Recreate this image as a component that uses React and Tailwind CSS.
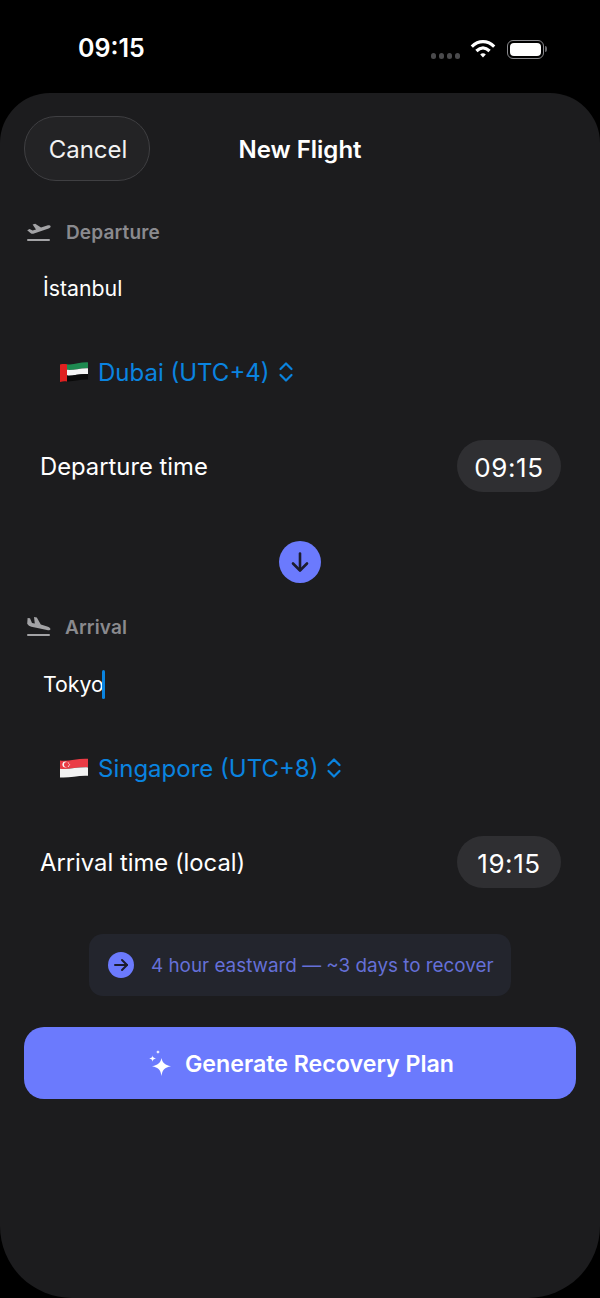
import React from "react";

const Takeoff = () => (
  <svg width="25" height="20" viewBox="0 0 25 20" className="shrink-0" fill="#a3a3a6">
    <path d="M1.2 8.2 L3.6 7 L6.6 8.6 L10 7.4 L6.6 2.6 L9.2 1.8 L15 5.6 L21.2 3.4 C22.8 2.9 24.3 3.2 24.6 4.2 C24.9 5.1 23.9 5.9 22.6 6.4 L8 11.6 C6.6 12.1 5.4 11.7 4.4 10.9 Z" />
    <rect x="1" y="17" width="23" height="2" rx="1" />
  </svg>
);

const Landing = () => (
  <svg width="25" height="20" viewBox="0 0 25 20" className="shrink-0" fill="#a3a3a6">
    <path d="M1.2 6.8 L1.6 1 L4 1.2 L6 6 L8.8 6.6 L8 0 L10.8 0.4 L14.8 7.6 L21.2 9.4 C23.2 10 24.7 11 24.4 12.2 C24.1 13.3 22.6 13.4 21 13 L5.4 9.8 C3.6 9.4 2.2 8.4 1.2 6.8 Z" />
    <rect x="1" y="17" width="23" height="2" rx="1" />
  </svg>
);

const UpDown = () => (
  <svg width="16" height="22" viewBox="0 0 16 22" className="shrink-0" fill="none" stroke="#0a84e0" strokeWidth="2.2" strokeLinecap="round" strokeLinejoin="round">
    <path d="M2.5 8 L8 2.5 L13.5 8" />
    <path d="M2.5 14 L8 19.5 L13.5 14" />
  </svg>
);

const UaeFlag = () => (
  <svg width="28" height="22" viewBox="0 0 28 22" className="shrink-0">
    <path d="M0 3.4 C3 2.8 5 3 7 3.2 L7 20.6 C5 20.2 3 20.2 0 21 Z" fill="#e02020" />
    <path d="M7 3.2 C13 4.4 20 1 28 1.4 L28 7.2 C20 6.8 13 9.6 7 8.8 Z" fill="#1e8a50" />
    <path d="M7 8.8 C13 9.6 20 6.8 28 7.2 L28 13 C20 12.6 13 15 7 14.6 Z" fill="#f4f4f4" />
    <path d="M7 14.6 C13 15 20 12.6 28 13 L28 18.6 C20 18.2 13 20.8 7 20.4 Z" fill="#0a0a0a" />
  </svg>
);

const SgFlag = () => (
  <svg width="28" height="22" viewBox="0 0 28 22" className="shrink-0">
    <path d="M0 3.4 C8 4.8 18 1 28 1.8 L28 10.4 C18 9.8 8 13 0 11.8 Z" fill="#ea3b45" />
    <path d="M0 11.8 C8 13 18 9.8 28 10.4 L28 18.8 C18 18.2 8 21.4 0 20.4 Z" fill="#f2f2f2" />
    <circle cx="5.4" cy="7.6" r="3" fill="#f6f6f6" />
    <circle cx="6.6" cy="7.6" r="2.6" fill="#ea3b45" />
    <circle cx="8.6" cy="6" r="0.6" fill="#f6f6f6" />
    <circle cx="9.6" cy="7.8" r="0.6" fill="#f6f6f6" />
    <circle cx="8.4" cy="9.2" r="0.6" fill="#f6f6f6" />
  </svg>
);

const Sparkles = () => (
  <svg width="24" height="28" viewBox="0 0 24 28" className="shrink-0" fill="#ffffff">
    <path d="M13.5 9 C14.3 13.6 16.6 16 23 17.2 C16.6 18.4 14.3 20.8 13.5 27 C12.7 20.8 10.4 18.4 4 17.2 C10.4 16 12.7 13.6 13.5 9 Z" />
    <path d="M4.6 6.6 C4.9 8.4 5.6 9.1 8 9.6 C5.6 10.1 4.9 10.8 4.6 12.8 C4.3 10.8 3.6 10.1 1.2 9.6 C3.6 9.1 4.3 8.4 4.6 6.6 Z" />
    <path d="M10 1 C10.2 2.2 10.7 2.7 12.2 3 C10.7 3.3 10.2 3.8 10 5.2 C9.8 3.8 9.3 3.3 7.8 3 C9.3 2.7 9.8 2.2 10 1 Z" />
  </svg>
);

const FieldSection = ({ icon, label, labelGap, top, city, caret, flag, zone, timeLabel, time, inputGap }) => (
  <>
    <div className={`flex h-6 items-center ${top}`}>
      <div className="ml-[2px]">{icon}</div>
      <span className={`${labelGap} pt-[2px] text-[19px] font-semibold tracking-[0.15px] text-[#8a8a8e]`}>{label}</span>
    </div>
    <div className={`${inputGap} flex h-10 items-center pl-[19px] text-[21.3px] text-white`}>
      <span className="pt-[2px]">{city}</span>
      {caret && <span className="-ml-[2px] h-[29px] w-[3px] rounded-full bg-[#0a84e0]"></span>}
    </div>
    <div className="mt-11 flex h-10 items-center pl-9">
      {flag}
      <span className="ml-[10px] pt-[2px] text-[24px] text-[#0a84e0]">{zone}</span>
      <span className="ml-[8px]"><UpDown /></span>
    </div>
    <div className="mt-12 flex h-[52px] items-center justify-between pl-4 pr-[15px]">
      <span className="pt-[2px] text-[23.8px] text-white">{timeLabel}</span>
      <span className="flex h-[52px] w-[104px] items-center justify-center rounded-full bg-[#2f2f32] pt-[2px] text-[26px] tracking-[0.6px] text-white">{time}</span>
    </div>
  </>
);

export default function App() {
  return (
    <div className="flex h-[1298px] w-[600px] flex-col overflow-hidden bg-black font-['Inter',sans-serif]">
      {/* status bar */}
      <div className="flex h-[93px] shrink-0 items-start justify-between pl-[78px] pr-[53px] pt-[32px]">
        <span className="text-[25px] leading-8 font-semibold text-white">09:15</span>
        <div className="flex items-center pt-[7px]">
          <div className="mt-[13px] flex gap-[3px]">
            <span className="h-[6px] w-[5px] rounded-full bg-[#4a4a4c]"></span>
            <span className="h-[6px] w-[5px] rounded-full bg-[#4a4a4c]"></span>
            <span className="h-[6px] w-[5px] rounded-full bg-[#4a4a4c]"></span>
            <span className="h-[6px] w-[5px] rounded-full bg-[#4a4a4c]"></span>
          </div>
          <svg width="26" height="20" viewBox="0 0 26 20" className="ml-[10px]" fill="none" stroke="#ffffff" strokeWidth="3.2">
            <path d="M1.8 7.6 C8.6 1 17.4 1 24.2 7.6" />
            <path d="M6.4 12 C10.6 8 15.4 8 19.6 12" />
            <path d="M10.2 15.4 L13 18.6 L15.8 15.4 C14 13.8 12 13.8 10.2 15.4 Z" fill="#ffffff" stroke="none" />
          </svg>
          <div className="ml-[11px] flex h-[19px] w-[37px] items-center justify-center rounded-[6px] border border-[#8a8a8e] p-[2px]">
            <div className="h-full w-full rounded-[4px] bg-white"></div>
          </div>
          <div className="ml-[1px] h-[6px] w-[2px] rounded-r-full bg-[#6a6a6e]"></div>
        </div>
      </div>

      {/* sheet */}
      <div className="flex-1 rounded-t-[50px] rounded-b-[72px] bg-[#1c1c1e] px-6 pt-[23px]">
        <div className="grid h-[65px] grid-cols-[1fr_auto_1fr] items-center">
          <button className="flex h-[65px] w-[126px] items-center justify-center rounded-[32px] border border-[#3f3f42] bg-[#232325] pt-[2px] pl-[2px] text-[24px] text-[#f2f2f2]">Cancel</button>
          <span className="pt-[2px] text-[24px] font-semibold text-white">New Flight</span>
          <span></span>
        </div>

        <FieldSection
          icon={<Takeoff />}
          label="Departure"
          labelGap="ml-[15px]"
          top="mt-[39px]"
          inputGap="mt-6"
          city="İstanbul"
          flag={<UaeFlag />}
          zone="Dubai (UTC+4)"
          timeLabel="Departure time"
          time="09:15"
        />

        <div className="mt-[49px] flex justify-center">
          <div className="flex h-[42px] w-[42px] items-center justify-center rounded-full bg-[#6b7afd]">
            <svg width="20" height="22" viewBox="0 0 20 22" fill="none" stroke="#1c1c2e" strokeWidth="2.6" strokeLinecap="round" strokeLinejoin="round">
              <path d="M10 2.5 V19" />
              <path d="M3 12.5 L10 19.5 L17 12.5" />
            </svg>
          </div>
        </div>

        <FieldSection
          icon={<Landing />}
          label="Arrival"
          labelGap="ml-[14px]"
          top="mt-8"
          inputGap="mt-[25px]"
          city="Tokyo"
          caret
          flag={<SgFlag />}
          zone="Singapore (UTC+8)"
          timeLabel="Arrival time (local)"
          time="19:15"
        />

        <div className="mt-[46px] flex justify-center">
          <div className="flex h-[62px] w-[422px] items-center rounded-[14px] bg-[#23252d] pl-[19px]">
            <div className="flex h-[26px] w-[26px] shrink-0 items-center justify-center rounded-full bg-[#6b7afd]">
              <svg width="16" height="14" viewBox="0 0 16 14" fill="none" stroke="#1c1c2e" strokeWidth="2" strokeLinecap="round" strokeLinejoin="round">
                <path d="M2 7 H14" />
                <path d="M9 2 L14 7 L9 12" />
              </svg>
            </div>
            <span className="ml-[17px] whitespace-nowrap pt-[2px] text-[18.85px] text-[#6570d8]">4 hour eastward — ~3 days to recover</span>
          </div>
        </div>

        <button className="mt-[31px] flex h-[72px] w-full items-center justify-center rounded-[20px] bg-[#6b7afd] pl-[2px] text-[23.2px] font-semibold text-white">
          <Sparkles />
          <span className="ml-[13px] pt-[2px]">Generate Recovery Plan</span>
        </button>
      </div>
    </div>
  );
}
